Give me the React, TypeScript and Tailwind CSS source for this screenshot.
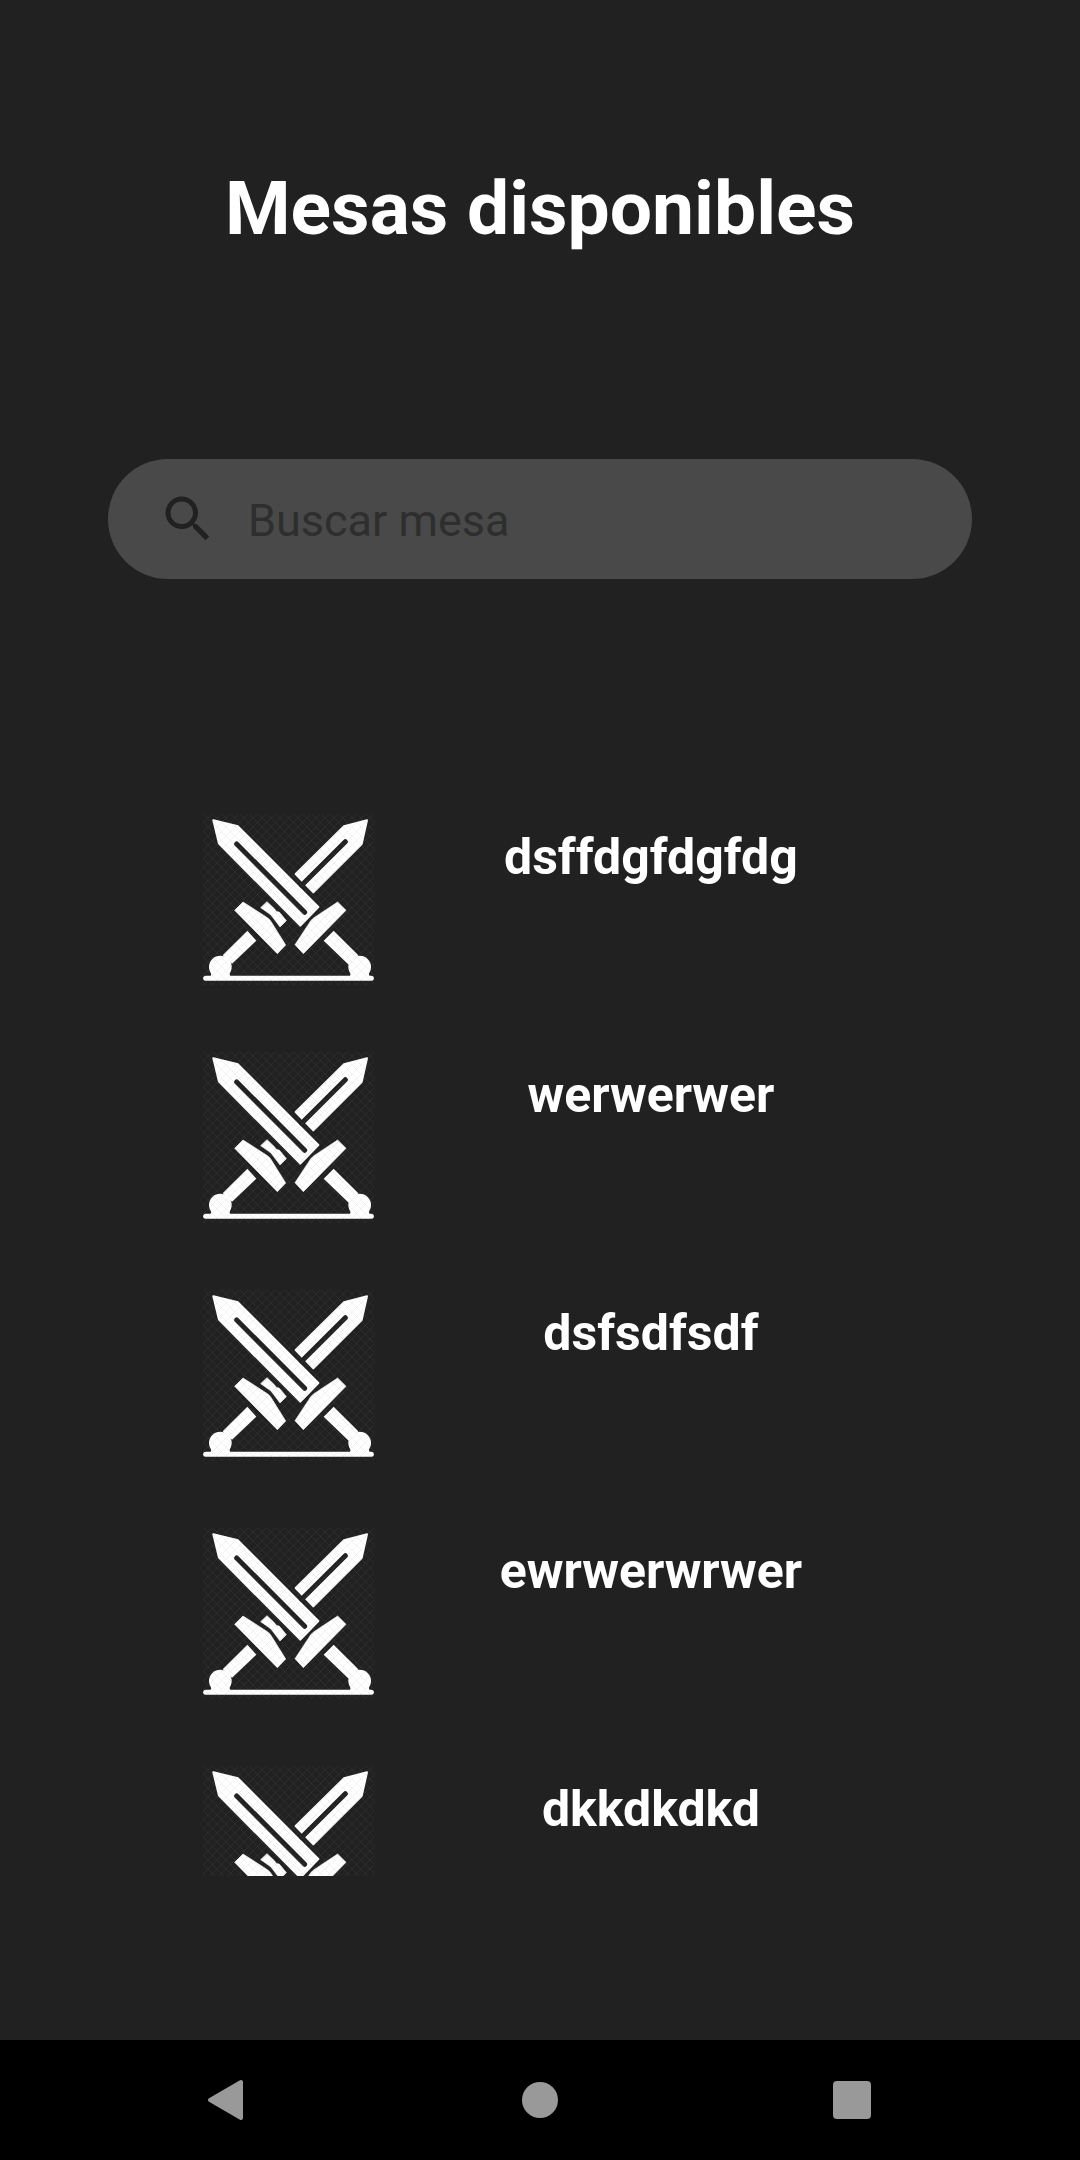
const mesas = ["dsffdgfdgfdg", "werwerwer", "dsfsdfsdf", "ewrwerwrwer", "dkkdkdkd"];

function SwordsIcon() {
  return (
    <svg viewBox="39 42 513 513" className="size-[171px] shrink-0" aria-hidden="true">
      <defs>
        <pattern id="mesh" width="27" height="27" patternUnits="userSpaceOnUse">
          <path d="M0 0L27 27M27 0L0 27" stroke="#808080" strokeOpacity="0.13" strokeWidth="2.5" />
        </pattern>
      </defs>
      <g fill="#fff" stroke="#fff" strokeLinejoin="round">
        <path strokeWidth="6" d="M70 61L144 79L385 321L331 377L87 131Z" />
        <path strokeWidth="6" d="M531 61L515 132L370 277L317 222L462 79Z" />
        <path strokeWidth="2" d="M159 306L134 331L262 461L287 435L244 366Q240 358 232 353Z" />
        <path strokeWidth="2" d="M443 306L468 331L340 461L315 434L356 372Q362 360 372 353Z" />
        <path strokeWidth="2" d="M231 305L212 323L235 339Q245 345 250 354L270 381L289 362L272 341Q268 334 262 335Q256 334 254 327Z" />
        <path stroke="none" d="M172 392L199 422L126 491L98 466ZM431 392L401 422L476 494L505 466Z" />
        <circle stroke="none" cx="91" cy="501" r="34" />
        <circle stroke="none" cx="509" cy="501" r="34" />
        <path stroke="none" d="M66 515H117L121 530H61ZM484 515H535L539 530H479Z" />
        <path strokeWidth="15" strokeLinecap="round" d="M47 535H544" />
      </g>
      <path d="M140 132L344 337M466 125L335 256" stroke="#212121" strokeWidth="15" strokeLinecap="round" />
      <rect x="39" y="42" width="513" height="513" fill="url(#mesh)" />
    </svg>
  );
}

export default function App() {
  return (
    <div className="flex h-screen flex-col bg-[#212121] font-['Roboto',sans-serif] text-white">
      <main className="flex min-h-0 flex-1 flex-col px-[10%] pb-[164px]">
        <h1 className="mt-[164px] text-center text-[75px] leading-[88px] font-bold">Mesas disponibles</h1>
        <label className="mt-[207px] flex h-[120px] shrink-0 items-center rounded-full bg-[#494949] pl-[50px] pr-12">
          <svg viewBox="0 0 24 24" className="size-[60px] shrink-0 fill-[#212121]" aria-hidden="true">
            <path d="M15.5 14h-.79l-.28-.27A6.47 6.47 0 0 0 16 9.5 6.5 6.5 0 1 0 9.5 16c1.61 0 3.09-.59 4.23-1.57l.27.28v.79l5 4.99L20.49 19l-4.99-5zm-6 0a4.5 4.5 0 1 1 0-9 4.5 4.5 0 0 1 0 9z" />
          </svg>
          <input
            type="text"
            aria-label="Buscar mesa"
            placeholder="Buscar mesa"
            className="ml-[30px] min-w-0 flex-1 bg-transparent pt-1 text-[45px] leading-[60px] outline-none placeholder:text-[#2e2e2e]"
          />
        </label>
        <ul className="mt-[235px] flex min-h-0 flex-1 flex-col gap-[67px] overflow-hidden pr-[19%] pl-[11%]">
          {mesas.map((mesa) => (
            <li key={mesa} className="flex shrink-0">
              <SwordsIcon />
              <h2 className="mt-[13px] ml-[120px] flex-1 text-center text-[50px] leading-[60px] font-bold">{mesa}</h2>
            </li>
          ))}
        </ul>
      </main>
      <nav className="flex h-[120px] shrink-0 items-center justify-between bg-black px-[18.3%]" aria-label="Sistema">
        <button type="button" aria-label="Atrás" className="flex size-[60px] items-center justify-center">
          <svg viewBox="0 0 60 60" className="size-[60px]" aria-hidden="true">
            <path d="M12 30L43 12V48Z" fill="#999" stroke="#999" strokeWidth="4" strokeLinejoin="round" />
          </svg>
        </button>
        <button type="button" aria-label="Inicio" className="flex size-[60px] items-center justify-center">
          <span className="size-9 rounded-full bg-[#999]" />
        </button>
        <button type="button" aria-label="Recientes" className="flex size-[60px] items-center justify-center">
          <span className="size-[38px] rounded bg-[#999]" />
        </button>
      </nav>
    </div>
  );
}
